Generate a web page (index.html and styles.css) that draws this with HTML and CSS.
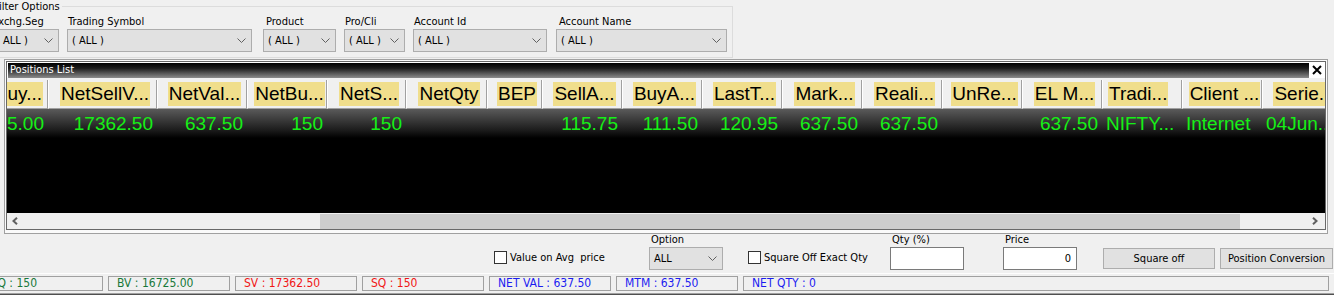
FILE: index.html
```html
<!DOCTYPE html>
<html lang="en">
<head>
  <meta charset="UTF-8">
  <meta name="viewport" content="width=device-width, initial-scale=1.0">
  <title>Positions</title>
  <link rel="stylesheet" href="styles.css">
</head>
<body>
  <div class="screen">
    <fieldset class="filter">
      <legend>Filter Options</legend>
      <div class="filter-row">
        <div class="fcol col-exch">
          <label>Exchg.Seg</label>
          <div class="combo cb-exch"><span>( ALL )</span><svg width="9" height="5" viewBox="0 0 9 5"><polyline points="0.5,0.5 4.5,4.5 8.5,0.5"/></svg></div>
        </div>
        <div class="fcol col-sym">
          <label>Trading Symbol</label>
          <div class="combo cb-sym"><span>( ALL )</span><svg width="9" height="5" viewBox="0 0 9 5"><polyline points="0.5,0.5 4.5,4.5 8.5,0.5"/></svg></div>
        </div>
        <div class="fcol col-prod">
          <label>Product</label>
          <div class="combo cb-prod"><span>( ALL )</span><svg width="9" height="5" viewBox="0 0 9 5"><polyline points="0.5,0.5 4.5,4.5 8.5,0.5"/></svg></div>
        </div>
        <div class="fcol col-pro">
          <label>Pro/Cli</label>
          <div class="combo cb-pro"><span>( ALL )</span><svg width="9" height="5" viewBox="0 0 9 5"><polyline points="0.5,0.5 4.5,4.5 8.5,0.5"/></svg></div>
        </div>
        <div class="fcol col-acc">
          <label>Account Id</label>
          <div class="combo cb-acc"><span>( ALL )</span><svg width="9" height="5" viewBox="0 0 9 5"><polyline points="0.5,0.5 4.5,4.5 8.5,0.5"/></svg></div>
        </div>
        <div class="fcol col-name">
          <label>Account Name</label>
          <div class="combo cb-name"><span>( ALL )</span><svg width="9" height="5" viewBox="0 0 9 5"><polyline points="0.5,0.5 4.5,4.5 8.5,0.5"/></svg></div>
        </div>
      </div>
    </fieldset>

    <div class="win">
      <div class="win-inner">
        <div class="titlebar">
          <div class="title">Positions List</div>
          <div class="close">
            <svg width="10" height="10" viewBox="0 0 10 10"><path d="M1 1 L9 9 M9 1 L1 9"/></svg>
          </div>
        </div>

        <div class="grid">
          <div class="hcell first"><span>Buy...</span></div>
          <div class="hcell"><span>NetSellV...</span></div>
          <div class="hcell"><span>NetVal...</span></div>
          <div class="hcell"><span>NetBu...</span></div>
          <div class="hcell"><span>NetS...</span></div>
          <div class="hcell"><span>NetQty</span></div>
          <div class="hcell"><span>BEP</span></div>
          <div class="hcell"><span>SellA...</span></div>
          <div class="hcell"><span>BuyA...</span></div>
          <div class="hcell"><span>LastT...</span></div>
          <div class="hcell"><span>Mark...</span></div>
          <div class="hcell"><span>Reali...</span></div>
          <div class="hcell"><span>UnRe...</span></div>
          <div class="hcell"><span>EL M...</span></div>
          <div class="hcell left"><span>Tradi...</span></div>
          <div class="hcell"><span>Client ...</span></div>
          <div class="hcell"><span>Serie...</span></div>

          <div class="dcell num">5.00</div>
          <div class="dcell num">17362.50</div>
          <div class="dcell num">637.50</div>
          <div class="dcell num">150</div>
          <div class="dcell num">150</div>
          <div class="dcell num"></div>
          <div class="dcell num"></div>
          <div class="dcell num">115.75</div>
          <div class="dcell num">111.50</div>
          <div class="dcell num">120.95</div>
          <div class="dcell num">637.50</div>
          <div class="dcell num">637.50</div>
          <div class="dcell num"></div>
          <div class="dcell num">637.50</div>
          <div class="dcell txt">NIFTY...</div>
          <div class="dcell txt">Internet</div>
          <div class="dcell txt">04Jun..</div>
        </div>
        <div class="rows-empty"></div>

        <div class="hscroll">
          <svg class="arrow" width="6" height="8" viewBox="0 0 6 8"><polyline points="5,0.8 1.5,4 5,7.2"/></svg>
          <div class="thumb"></div>
          <svg class="arrow right" width="6" height="8" viewBox="0 0 6 8"><polyline points="1,0.8 4.5,4 1,7.2"/></svg>
        </div>
      </div>
    </div>

    <div class="actions">
      <div class="act act-avg">
        <span class="check"></span><span>Value on Avg&nbsp; price</span>
      </div>
      <div class="act act-option">
        <label>Option</label>
        <div class="combo cb-option"><span>ALL</span><svg width="9" height="5" viewBox="0 0 9 5"><polyline points="0.5,0.5 4.5,4.5 8.5,0.5"/></svg></div>
      </div>
      <div class="act act-exact">
        <span class="check"></span><span>Square Off Exact Qty</span>
      </div>
      <div class="act act-qty">
        <label>Qty (%)</label>
        <div class="field"></div>
      </div>
      <div class="act act-price">
        <label>Price</label>
        <div class="field value">0</div>
      </div>
      <button class="btn btn-sq">Square off</button>
      <button class="btn btn-conv">Position Conversion</button>
    </div>

    <div class="status">
      <div class="panel green">BQ : 150</div>
      <div class="panel green">BV : 16725.00</div>
      <div class="panel red">SV : 17362.50</div>
      <div class="panel red">SQ : 150</div>
      <div class="panel blue">NET VAL : 637.50</div>
      <div class="panel blue">MTM : 637.50</div>
      <div class="panel blue last">NET QTY : 0</div>
    </div>
    <div class="bottom-edge"></div>
  </div>
</body>
</html>
```

FILE: styles.css
```css
html, body {
  margin: 0;
  padding: 0;
}
body {
  background-color: #f0f0f0;
  font-family: "DejaVu Sans Condensed", "Liberation Sans", sans-serif;
  font-size: 11px;
  color: #000;
  overflow: hidden;
}
.screen {
  width: 1334px;
  height: 295px;
  overflow: hidden;
  display: flex;
  flex-direction: column;
}

/* filter group */
.filter {
  width: max-content;
  margin: 0 0 0 -12px;
  padding: 0 5px 5px 2px;
  border: 1px solid #dcdcdc;
  min-inline-size: 0;
  flex-shrink: 0;
}
.filter legend {
  padding: 0 2px;
  margin-left: 1px;
  line-height: 13px;
}
.filter-row {
  display: flex;
  padding-top: 2px;
}
.fcol {
  display: flex;
  flex-direction: column;
}
.fcol label {
  line-height: 13px;
  padding-left: 1px;
  white-space: nowrap;
}
.col-exch { width: 76px; }
.col-sym { width: 196px; }
.col-prod { width: 81px; }
.col-pro { width: 69px; }
.col-acc { width: 143px; }
.col-name { width: 171px; }
.col-prod label { padding-left: 3px; }
.col-name label { padding-left: 3px; }

.combo {
  box-sizing: border-box;
  height: 23px;
  margin-top: 1px;
  display: flex;
  align-items: center;
  justify-content: space-between;
  padding: 0 5px 0 4px;
  background-color: #e1e1e1;
  border: 1px solid #adadad;
  white-space: nowrap;
}
.combo svg polyline {
  fill: none;
  stroke: #606060;
  stroke-width: 1;
}
.cb-exch { width: 68px; }
.cb-sym { width: 185px; }
.cb-prod { width: 73px; }
.cb-pro { width: 61px; }
.cb-acc { width: 134px; }
.cb-name { width: 171px; }

/* positions window */
.win {
  width: 1324px;
  box-sizing: border-box;
  margin: 1px 0 0 4px;
  border: 1px solid #a0a0a0;
  padding: 1px 1px 3px 1px;
  background-color: #fafafa;
  flex-shrink: 0;
}
.win-inner {
  border: 1px solid #696969;
  background-color: #f0f0f0;
  display: flex;
  flex-direction: column;
}
.titlebar {
  height: 16px;
  display: flex;
}
.title {
  flex: 1;
  box-sizing: border-box;
  border-top: 1px solid #fff;
  border-left: 1px solid #fff;
  background: linear-gradient(to bottom, #000 0%, #1c1c1c 35%, #8c8c8c 100%);
  color: #fff;
  line-height: 14px;
  padding-left: 2px;
}
.close {
  width: 16px;
  background-color: #fff;
  display: flex;
  align-items: center;
  justify-content: center;
}
.close path {
  stroke: #000;
  stroke-width: 2;
}

.grid {
  margin-top: 2px;
  display: grid;
  grid-template-columns: 41px 109px 90px 80px 79px 81px 55px 80px 80px 80px 80px 80px 80px 80px 80px 80px 80px;
  grid-template-rows: 29px 29px;
  width: 1318px;
  overflow: hidden;
  font-family: "Liberation Sans", Arial, sans-serif;
  font-size: 19px;
  background-color: #000;
}
.hcell {
  box-sizing: border-box;
  display: flex;
  align-items: center;
  justify-content: center;
  padding-left: 5px;
  background-color: #f0f0f0;
  border-left: 1px solid #fff;
  border-right: 1px solid #a0a0a0;
  border-bottom: 1px solid #a0a0a0;
  overflow: hidden;
  white-space: nowrap;
}
.hcell span {
  background-color: #f0de8c;
  line-height: 24px;
  padding: 0 1px;
}
.hcell.first {
  justify-content: flex-end;
  padding: 0 4px 0 0;
  border-left: none;
}
.hcell.left {
  justify-content: flex-start;
  padding-left: 5px;
}
.dcell {
  line-height: 29px;
  color: #16f016;
  background: linear-gradient(to bottom, #5a5a5a 0%, #1a1a1a 75%, #000 100%);
  white-space: nowrap;
  overflow: hidden;
}
.dcell.num {
  text-align: right;
  padding-right: 4px;
}
.dcell.txt {
  text-align: left;
  padding-left: 4px;
}
.rows-empty {
  height: 75px;
  background-color: #000;
}
.hscroll {
  height: 16px;
  display: flex;
  align-items: center;
  background-color: #f0f0f0;
}
.hscroll .arrow {
  margin-left: 5px;
}
.hscroll .arrow.right {
  margin-left: 72px;
}
.hscroll polyline {
  fill: none;
  stroke: #606060;
  stroke-width: 2;
}
.thumb {
  margin-left: 302px;
  width: 920px;
  height: 15px;
  align-self: flex-end;
  background-color: #cdcdcd;
}

/* actions */
.actions {
  height: 39px;
  flex-shrink: 0;
  display: flex;
  align-items: flex-start;
  padding-left: 494px;
}
.act {
  display: flex;
}
.act label {
  line-height: 12px;
  padding-left: 2px;
}
.act-avg, .act-exact {
  margin-top: 17px;
  align-items: center;
  white-space: nowrap;
}
.act-avg { width: 155px; }
.act-exact { width: 142px; }
.check {
  box-sizing: border-box;
  width: 13px;
  height: 13px;
  background-color: #fff;
  border: 1px solid #333;
  margin-right: 3px;
}
.act-option, .act-qty, .act-price {
  flex-direction: column;
}
.act-option { width: 99px; }
.act-qty { width: 113px; }
.act-price { width: 100px; }
.cb-option {
  width: 74px;
  margin-top: 1px;
}
.field {
  box-sizing: border-box;
  width: 74px;
  height: 23px;
  margin-top: 1px;
  background-color: #fff;
  border: 1px solid #7a7a7a;
  text-align: right;
  line-height: 21px;
  padding-right: 5px;
}
.btn {
  box-sizing: border-box;
  height: 21px;
  margin-top: 14px;
  background-color: #e1e1e1;
  border: 1px solid #adadad;
  font-family: inherit;
  font-size: 11px;
  color: #000;
  padding: 0;
}
.btn-sq {
  width: 112px;
  margin-right: 5px;
}
.btn-conv {
  width: 113px;
}

/* status bar */
.status {
  height: 20px;
  flex-shrink: 0;
  box-sizing: border-box;
  border-top: 1px solid #fdfdfd;
  padding-top: 2px;
  margin-left: -19px;
  display: flex;
  gap: 5px;
  font-size: 12px;
}
.panel {
  box-sizing: border-box;
  width: 122px;
  height: 15px;
  border: 1px solid #a0a0a0;
  padding-left: 8px;
  line-height: 13px;
  white-space: nowrap;
}
.panel.last {
  flex: 1;
  margin-right: 5px;
}
.green { color: #17783a; }
.red { color: #f01515; }
.blue { color: #1c1cf0; }
.bottom-edge {
  height: 3px;
  flex-shrink: 0;
  box-sizing: border-box;
  border-top: 1px solid #a0a0a0;
  background-color: #505050;
}
```
